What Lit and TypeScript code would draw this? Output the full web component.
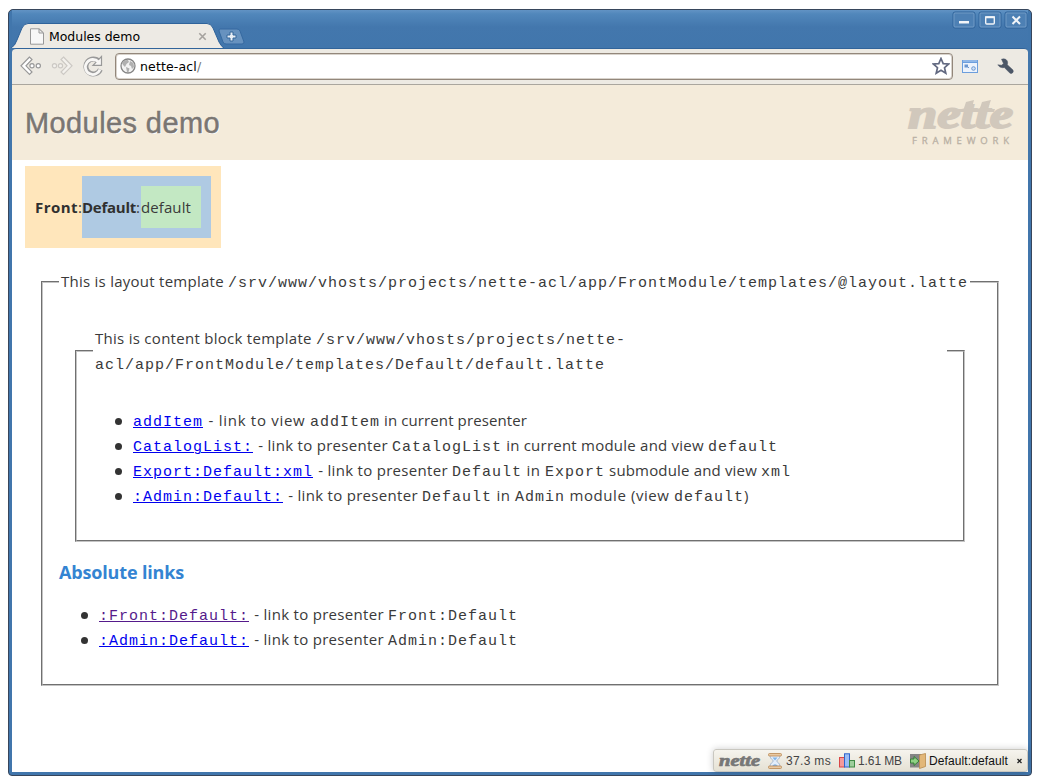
import { LitElement, html, css } from "lit";
import { customElement, property } from "lit/decorators.js";

/** Inline text whose letter spacing is computed so that it fills a given width. */
@customElement("fit-text")
class FitText extends LitElement {
  @property({ type: Number }) w = 0;
  static styles = css`
    :host { display: inline-block; white-space: pre; text-decoration: inherit; }
    span { white-space: pre; }
  `;
  render() {
    return html`<span><slot></slot></span>`;
  }
  updated() {
    const n = (this.textContent || "").length;
    this.style.letterSpacing = "0";
    const span = this.renderRoot.querySelector("span")!;
    const natural = span.getBoundingClientRect().width;
    this.style.letterSpacing = (this.w - natural) / n + "px";
    this.style.width = this.w + "px";
  }
}

@customElement("browser-chrome")
class BrowserChrome extends LitElement {
  static styles = css`
    :host { display: block; font: 12.5px "DejaVu Sans", sans-serif; color: #000; }
    .title { height: 38px; display: flex; justify-content: space-between; background: linear-gradient(#6293c4 0, #5187bb 4px, #4377ad 17px, #4176ac 100%); }
    .tabs { display: flex; align-items: flex-end; margin-left: -1px; }
    .tab { display: grid; width: 213px; height: 25px; }
    .tab > * { grid-area: 1 / 1; }
    .label { display: flex; align-items: center; padding: 1px 17px 0 18px; }
    .label svg { margin-right: 4px; }
    .label .close { margin: 0 0 0 auto; }
    .new { margin-bottom: 3px; margin-left: -6px; }
    .buttons { display: flex; gap: 2px; padding: 1px 0 0 0; }
    .bar { height: 37px; background: #edeae3; border-bottom: 1px solid #aaa69e; border-top: 1px solid #31649a; border-radius: 4px 4px 0 0; display: flex; align-items: center; box-sizing: border-box; padding: 0 14px 1px 8px; }
    .nav { display: flex; gap: 9px; width: 95px; }
    .url { box-sizing: border-box; width: 838px; height: 27px; border: 1px solid #93877b; box-shadow: inset 0 0 0 1px #d8d3cc; border-radius: 4px; background: #fff; display: flex; align-items: center; padding: 0 2px 0 4px; margin-right: 9px; }
    .url .globe { margin-right: 4px; }
    .url .star { margin-left: auto; }
    .slash { color: #777; }
    .wrench { margin-left: auto; }
  `;
  button(shape: unknown) {
    return html`<svg width="24" height="18" viewBox="0 0 24 18">
      <rect x="1" y="1" width="22" height="16" rx="2" fill="#4d80b4" stroke="#2f639a" />
      <rect x="2" y="2" width="20" height="14" rx="1" fill="none" stroke="#7ba3cb" opacity=".75" />
      ${shape}
    </svg>`;
  }
  render() {
    return html`
      <div class="title">
        <div class="tabs">
          <div class="tab">
            <svg width="213" height="25" viewBox="0 0 213 25">
              <path d="M0 25 Q4 23 6 17 L11 5 Q13 .5 17 .5 H196 Q200 .5 202 5 L208 19 Q211 24.500 213 25Z" fill="#edeae4" />
              <path d="M0 25 Q4 23 6 17 L11 5 Q13 .5 17 .5 H196 Q200 .5 202 5 L208 19 Q211 24.500 213 25" fill="none" stroke="#2f639b" />
            </svg>
            <div class="label">
              <svg width="16" height="17" viewBox="0 0 16 17">
                <path d="M1.500 .8H10L14.500 5V16.200H1.500Z" fill="#f8f8f8" stroke="#999" />
                <path d="M10 .8V5H14.500Z" fill="#eee" stroke="#999" />
              </svg>
              <fit-text w="91">Modules demo</fit-text>
              <svg class="close" width="9" height="9" viewBox="0 0 9 9"><path d="M1.300 1.300L7.700 7.700M7.700 1.300L1.300 7.700" stroke="#a5a29e" stroke-width="1.600" /></svg>
            </div>
          </div>
          <svg class="new" width="27" height="17" viewBox="0 0 27 17">
            <path d="M2 1H19Q21 1 22 3L26 14Q26 16 24 16H8Q6 16 5 14L1 3Q1 1 2 1Z" fill="#6792bf" stroke="#3669a0" />
            <path d="M12 4h3v3h3v3h-3v3h-3v-3h-3v-3h3z" fill="#e8eef5" stroke="#35669a" />
          </svg>
        </div>
        <div class="buttons">
          ${this.button(html`<svg><rect x="7" y="10" width="10" height="2.500" fill="#f1f4f8" /></svg>`)}
          ${this.button(html`<svg><rect x="7.700" y="6" width="8.600" height="7" rx="1" fill="none" stroke="#f1f4f8" stroke-width="1.400" /><path d="M7 6.300h10" stroke="#f1f4f8" stroke-width="2" /></svg>`)}
          ${this.button(html`<svg><path d="M8.500 5.500L16 13M16 5.500L8.500 13" stroke="#f1f4f8" stroke-width="2" /></svg>`)}
        </div>
      </div>
      <div class="bar">
        <div class="nav">
          <svg width="22" height="22" viewBox="0 0 22 22" fill="#fff" stroke="#999" stroke-width="1.200">
            <path d="M9.500 2L1 10.800L9.500 19.500L12 17L6 10.800L12 4.500Z" /><circle cx="12" cy="10.800" r="2.100" /><circle cx="18.300" cy="10.800" r="2.100" />
          </svg>
          <svg width="22" height="22" viewBox="0 0 22 22" fill="#f3f1ed" stroke="#ccc9c4" stroke-width="1.200">
            <path d="M12.500 2L21 10.800L12.500 19.500L10 17L16 10.800L10 4.500Z" /><circle cx="9.500" cy="10.800" r="2.100" /><circle cx="3.500" cy="10.800" r="2.100" />
          </svg>
          <svg width="22" height="22" viewBox="0 0 22 22">
            <path d="M17 6.500A7.500 7.500 0 1 0 18.300 14.500" fill="none" stroke="#999" stroke-width="5" />
            <path d="M19.500 1.500V10.300H11Z" fill="#f8f7f5" stroke="#999" stroke-width="1.200" />
            <path d="M16.500 7A7.500 7.500 0 1 0 18 14.500" fill="none" stroke="#f8f7f5" stroke-width="2.800" />
          </svg>
        </div>
        <div class="url">
          <svg class="globe" width="16" height="16" viewBox="0 0 16 16">
            <circle cx="8" cy="8" r="7" fill="#f2f2f2" stroke="#858585" stroke-width="1.300" />
            <path d="M2 5Q4 1.500 8 2L9 4L6.500 6L5 9L3 7ZM10 3L13.500 5L14 9L12 11L11 8L9 7ZM6 9L9.500 10.500L8.500 14H7Z" fill="#b0b0b0" />
          </svg>
          <fit-text w="57">nette-acl</fit-text><span class="slash">/</span>
          <svg class="star" width="18" height="18" viewBox="0 0 18 18"><path d="M9 1.500L11.200 6.600L16.600 7L12.500 10.700L13.800 16.200L9 13.300L4.200 16.200L5.500 10.700L1.400 7L6.800 6.600Z" fill="#fff" stroke="#626981" stroke-width="1.700" /></svg>
        </div>
        <svg width="16" height="13" viewBox="0 0 16 13">
          <rect x=".5" y=".5" width="15" height="12" fill="#edf3fc" stroke="#6c9edd" /><path d="M0 1.500h16" stroke="#6c9edd" stroke-width="3" /><path d="M1 1h14" stroke="#b4cff1" />
          <rect x="2.500" y="4.500" width="3.500" height="3" fill="#6a96cf" /><circle cx="11.500" cy="8.500" r="1.800" fill="#cfe0f6" stroke="#6a96cf" /><path d="M6 8l1-1" stroke="#6a96cf" />
        </svg>
        <svg class="wrench" width="17" height="17" viewBox="0 0 17 17">
          <path d="M4.500 1.200Q8.500 0 10.300 3Q11 5 10.300 6.700L16 12Q17 14.500 14.500 15.500Q13.500 15.800 12.500 14.800L7.300 9.500Q3 10.500 .8 6.800L4.500 7.200L6.500 5.500Z" fill="#4c5767" stroke="#4c5767" stroke-width=".5" />
        </svg>
      </div>`;
  }
}

@customElement("debug-bar")
class DebugBar extends LitElement {
  static styles = css`
    :host { display: flex; align-items: center; box-sizing: border-box; width: 315px; height: 23px; padding: 0 5px 0 4px; border: 1px solid #c9c7c0; border-radius: 3px; background: linear-gradient(#f6f4ee, #e5e1d4); font: 12px "Liberation Sans", sans-serif; color: #444; box-shadow: 0 0 7px rgba(0, 0, 0, .2); }
    svg { overflow: visible; }
    .logo { margin-right: 7px; }
    .ico { margin-right: 3px; flex: none; }
    .hour { margin-right: 4px; }
    .gap { margin-right: 8px; }
    .dark { color: #111; }
    .x { margin-left: auto; }
  `;
  render() {
    return html`
      <svg class="logo" width="43" height="20" viewBox="0 0 43 20">
        <text x="1" y="15" textLength="41" lengthAdjust="spacingAndGlyphs" font-family="Liberation Serif" font-size="16" font-weight="bold" font-style="italic" fill="#777" stroke="#777" stroke-width=".7">nette</text>
      </svg>
      <svg class="ico hour" width="14" height="16" viewBox="0 0 14 16">
        <path d="M2 2C2 6 5 7 5.500 8C5 9 2 10 2 14H12C12 10 9 9 8.500 8C9 7 12 6 12 2Z" fill="#e4eefa" stroke="#9fb4cf" />
        <path d="M4.500 4.500h5L7 7.500ZM4 13Q7 9.500 10 13Z" fill="#7fb4ea" />
        <rect x=".5" y=".5" width="13" height="2.500" rx="1" fill="#e9c9a2" stroke="#b98651" stroke-width=".8" /><rect x=".5" y="13" width="13" height="2.500" rx="1" fill="#e9c9a2" stroke="#b98651" stroke-width=".8" />
      </svg>
      <fit-text class="gap" w="45">37.3 ms</fit-text>
      <svg class="ico" width="16" height="15" viewBox="0 0 16 15">
        <rect x=".5" y="4.500" width="5" height="9.500" fill="#f59a9a" stroke="#d94747" /><rect x="5.500" y=".8" width="5" height="13.200" fill="#9bbdf5" stroke="#2f65cc" /><rect x="10.500" y="7.500" width="5" height="6.500" fill="#9dce9b" stroke="#3e8a45" />
      </svg>
      <fit-text class="gap" w="44">1.61 MB</fit-text>
      <svg class="ico" width="16" height="16" viewBox="0 0 16 16">
        <rect x="0" y="1" width="11" height="13.500" fill="#858585" /><path d="M9.500 2L15.500 .5V13.500L9.500 15.500Z" fill="#e2b778" stroke="#b98a4c" stroke-width=".8" />
        <path d="M.5 6H4V3.500L9 8L4 12.500V10H.5Z" fill="#8fd184" stroke="#2f7a32" stroke-width=".9" />
      </svg>
      <fit-text class="dark" w="79">Default:default</fit-text>
      <svg class="x" width="5" height="6" viewBox="0 0 5 6"><path d="M.5 1L4.500 5M4.500 1L.5 5" stroke="#222" stroke-width="1.300" /></svg>`;
  }
}

@customElement("app-root")
class AppRoot extends LitElement {
  static styles = css`
    :host { display: block; box-sizing: border-box; width: 1040px; height: 784px; padding: 9px 8px 8px; background: #fff; overflow: hidden; }
    .window { box-sizing: border-box; width: 1024px; height: 767px; border: 1px solid #37465c; border-radius: 5px 5px 4px 4px; background: #4176ac; padding: 0 3px 3px; overflow: hidden; display: flex; flex-direction: column; }
    .page { flex: 1; display: flex; flex-direction: column; background: #fff; font: 15px/25px "Open Sans", sans-serif; color: #3a3a3a; }
    .head { box-sizing: border-box; height: 75px; flex: none; background: #f4ebda; display: flex; justify-content: space-between; align-items: center; padding: 1px 13px 0; }
    h1 { margin: 0; font: 29px "Liberation Sans", sans-serif; color: #7a7672; -webkit-text-stroke: .5px #7a7672; text-shadow: 1px 1px 0 #fff; }
    .head svg { overflow: visible; }
    .path { align-self: flex-start; display: flex; margin: 6px 0 0 13px; background: #ffe6bb; padding: 10px; line-height: 22px; height: 62px; align-items: center; }
    .path b { color: #303030; }
    .pres { display: flex; align-items: center; background: #afcae3; padding: 10px 10px 10px 0; }
    .act { background: #c3e8c3; padding: 10px 10px 10px 0; }
    fieldset { margin: 0; min-width: 0; border: 2px groove #c4c4c4; padding: 0 16px; box-sizing: border-box; }
    legend { padding: 0 2px; }
    .line { display: flex; height: 25px; align-items: baseline; white-space: pre; }
    .line::before { content: "\\200b"; width: 0; }
    .outer { width: 958px; margin: 21px 0 0 29px; height: 417px; }
    .inner { margin: 32px 16px 0; height: 216px; }
    .inner legend { width: 850px; }
    ul { margin: 0; padding: 0 0 0 40px; list-style: none; }
    .inner ul { margin-top: 32px; }
    li { white-space: pre; height: 25px; display: flex; align-items: baseline; }
    li::before { content: ""; align-self: center; width: 7px; height: 7px; border-radius: 50%; background: #333; margin: 1px 11.500px 0 -18.500px; }
    code, a { font-family: "Liberation Mono", monospace; font-size: 15px; }
    a { color: #00e; text-decoration: underline; text-decoration-thickness: 1px; margin-right: 1px; }
    .seen { color: #551a8b; }
    h3 { margin: 17px 0 17px; font: bold 18px/26px "Open Sans", sans-serif; color: #3484d2; }
    .foot { margin-top: auto; align-self: flex-end; }
  `;
  mono(t: string) {
    return html`<code><fit-text w=${t.length * 10}>${t}</fit-text></code>`;
  }
  link(t: string, cls = "") {
    return html`<a class=${cls}><fit-text w=${t.length * 10}>${t}</fit-text></a>`;
  }
  t(w: number, t: string) {
    return html`<fit-text w=${w}>${t}</fit-text>`;
  }
  render() {
    return html`
      <div class="window">
        <browser-chrome></browser-chrome>
        <div class="page">
          <div class="head">
            <h1>${this.t(195, "Modules demo")}</h1>
            <svg width="110" height="50" viewBox="0 0 110 50">
              <g fill="#d1c8bc">
                <text x="3" y="30" textLength="105" lengthAdjust="spacingAndGlyphs" font-family="Liberation Serif" font-size="40" font-weight="bold" font-style="italic" stroke="#d1c8bc" stroke-width="1.800">nette</text>
                <path d="M49 11H90L89 14H48ZM61 4L69 2L66 13H58ZM77 4L86 2L82 13H74Z" />
              </g>
              <text x="7" y="46" textLength="97" lengthAdjust="spacing" font-family="Open Sans" font-size="9.500" fill="#b9b0a4" stroke="#b9b0a4" stroke-width=".3">FRAMEWORK</text>
            </svg>
          </div>
          <div class="path">
            <b>${this.t(43, "Front")}</b>${this.t(4, ":")}
            <div class="pres"><b>${this.t(54, "Default")}</b>${this.t(5, ":")}<div class="act">${this.t(50, "default")}</div></div>
          </div>
          <fieldset class="outer">
            <legend><div class="line">${this.t(167, "This is layout template ")}${this.mono("/srv/www/vhosts/projects/nette-acl/app/FrontModule/templates/@layout.latte")}</div></legend>
            <fieldset class="inner">
              <legend><div class="line">${this.t(221, "This is content block template ")}${this.mono("/srv/www/vhosts/projects/nette-")}</div><div class="line">${this.mono("acl/app/FrontModule/templates/Default/default.latte")}</div></legend>
              <ul>
                <li>${this.link("addItem")}${this.t(106, " - link to view ")}${this.mono("addItem")}${this.t(147, " in current presenter")}</li>
                <li>${this.link("CatalogList:")}${this.t(138, " - link to presenter ")}${this.mono("CatalogList")}${this.t(206, " in current module and view ")}${this.mono("default")}</li>
                <li>${this.link("Export:Default:xml")}${this.t(138, " - link to presenter ")}${this.mono("Default")}${this.t(23, " in ")}${this.mono("Export")}${this.t(156, " submodule and view ")}${this.mono("xml")}</li>
                <li>${this.link(":Admin:Default:")}${this.t(138, " - link to presenter ")}${this.mono("Default")}${this.t(23, " in ")}${this.mono("Admin")}${this.t(109, " module (view ")}${this.mono("default")}${this.t(7, ")")}</li>
              </ul>
            </fieldset>
            <h3>${this.t(125, "Absolute links")}</h3>
            <ul>
              <li>${this.link(":Front:Default:", "seen")}${this.t(138, " - link to presenter ")}${this.mono("Front:Default")}</li>
              <li>${this.link(":Admin:Default:")}${this.t(138, " - link to presenter ")}${this.mono("Admin:Default")}</li>
            </ul>
          </fieldset>
          <debug-bar class="foot"></debug-bar>
        </div>
      </div>`;
  }
}
